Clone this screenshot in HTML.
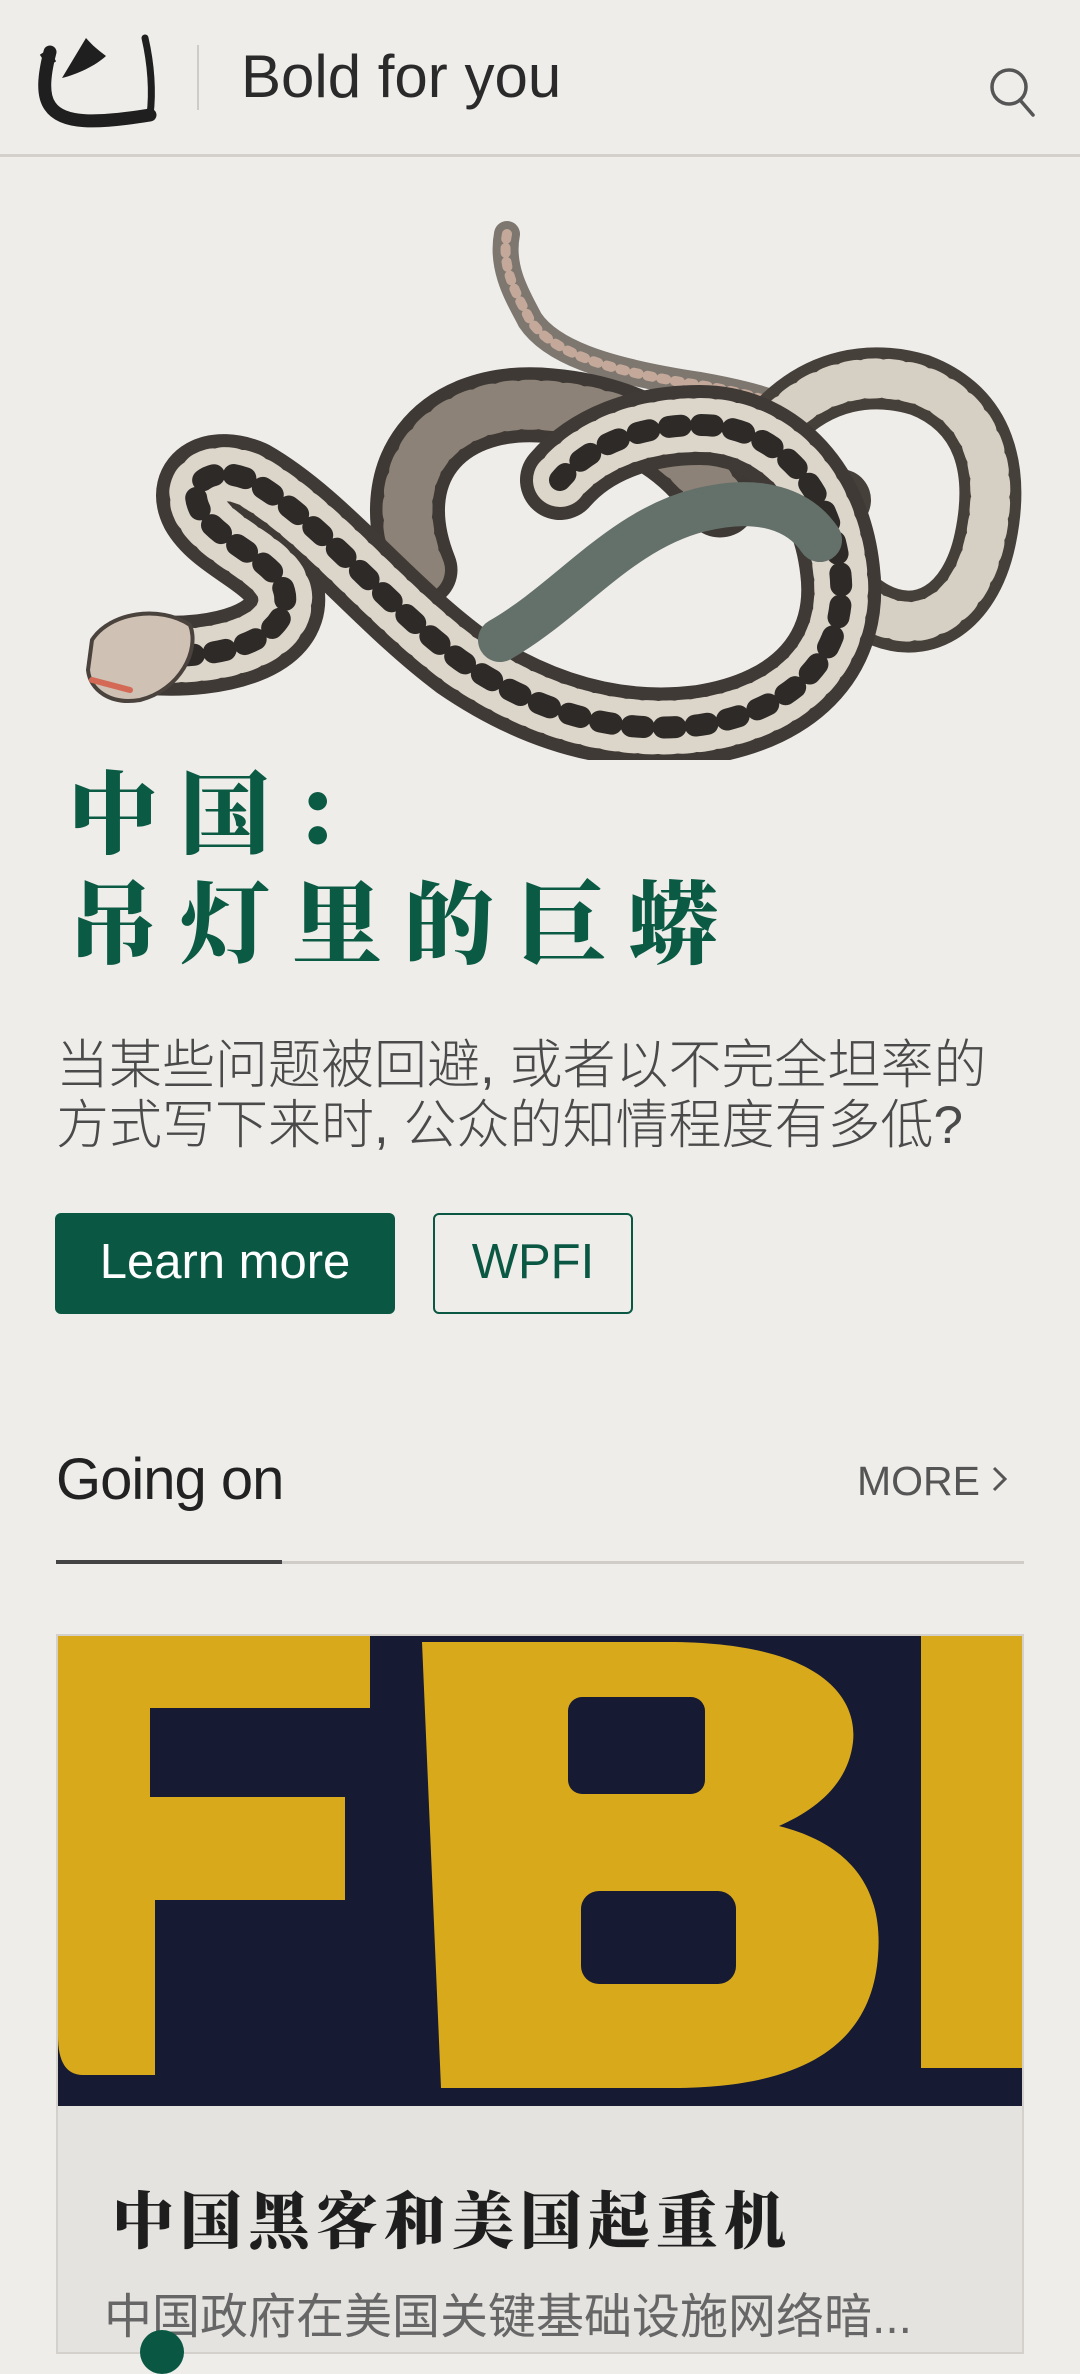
<!DOCTYPE html>
<html><head><meta charset="utf-8"><style>
*{margin:0;padding:0;box-sizing:border-box}
body{width:1080px;height:2337px;background:#efedea;overflow:hidden;position:relative;font-family:"Liberation Sans","Noto Sans CJK SC",sans-serif}
.abs{position:absolute}
.hdr{left:0;top:0;width:1080px;height:157px;border-bottom:3px solid #d3d0cb}
.brand{left:241px;top:42px;font-size:60px;color:#2a2a2a;white-space:nowrap}
.title{left:68px;font-family:"Noto Serif CJK SC","Liberation Serif",serif;font-weight:900;font-size:90px;color:#0b5a44;letter-spacing:22px;white-space:nowrap;line-height:110px}
.sub{left:56px;top:1036px;width:960px;font-size:53px;line-height:60px;color:#4a4a4a;font-family:"Liberation Sans","Noto Sans CJK SC",sans-serif;font-weight:300}
.btn{top:1213px;height:101px;border-radius:6px;font-size:49px;line-height:99px;text-align:center}
</style></head><body>
<div class="abs hdr"></div>
<svg class="abs" style="left:0;top:0" width="200" height="150" viewBox="0 0 200 150">
<path d="M50 52 C44 75 42 95 50 106 C62 124 95 124 150 115" fill="none" stroke="#1f1f1f" stroke-width="13" stroke-linecap="round"/>
<path d="M150 115 C153 92 151 64 145 38" fill="none" stroke="#1f1f1f" stroke-width="7" stroke-linecap="round"/>
<path d="M62 78 L86 38 C92 45 98 50 106 56 C95 66 78 74 62 78 Z" fill="#1f1f1f"/>
<path d="M44 52 L52 64" stroke="#1f1f1f" stroke-width="10"/>
</svg>
<div class="abs" style="left:197px;top:45px;width:2px;height:65px;background:#cfccc7"></div>
<div class="abs brand">Bold for you</div>
<svg class="abs" style="left:985px;top:63px" width="60" height="60" viewBox="0 0 60 60">
<ellipse cx="24" cy="24" rx="17" ry="17" fill="none" stroke="#555" stroke-width="3.5"/>
<path d="M35 37 L48 52" stroke="#555" stroke-width="3.5" stroke-linecap="round"/>
</svg>

<!-- snake (page coords) -->
<svg class="abs" style="left:0;top:0" width="1080" height="760" viewBox="0 0 1080 760">
<g fill="none" stroke-linecap="round" stroke-linejoin="round">
<!-- tail -->
<path d="M507 234 C500 270 520 300 530 320 C550 350 600 370 700 385 C740 392 770 400 790 410" stroke="#7d776f" stroke-width="26"/>
<path d="M507 234 C500 270 520 300 530 320 C550 350 600 370 700 385 C740 392 770 400 790 410" stroke="#c4a99a" stroke-width="10" stroke-dasharray="5 9"/>
<!-- right loop -->
<path d="M780 420 C820 380 870 370 920 385 C985 410 1000 470 985 540 C970 610 920 640 870 610 C830 585 820 540 840 500" stroke="#46403a" stroke-width="62"/>
<path d="M780 420 C820 380 870 370 920 385 C985 410 1000 470 985 540 C970 610 920 640 870 610 C830 585 820 540 840 500" stroke="#d6cfc4" stroke-width="40" stroke-dasharray="8 12"/>
<!-- back coil -->
<path d="M420 570 C380 470 440 400 540 405 C620 410 680 440 720 500" stroke="#3e3935" stroke-width="75"/>
<path d="M420 570 C380 470 440 400 540 405 C620 410 680 440 720 500" stroke="#8d8277" stroke-width="50" stroke-dasharray="6 14"/>
<!-- main body -->
<path d="M150 655 C220 660 290 640 285 595 C280 560 220 545 200 510 C185 480 215 465 250 480 C320 520 380 600 460 660 C540 715 620 735 700 725 C800 710 850 650 840 570 C830 480 770 425 700 425 C640 425 590 445 560 480" stroke="#3f3a36" stroke-width="80"/>
<path d="M150 655 C220 660 290 640 285 595 C280 560 220 545 200 510 C185 480 215 465 250 480 C320 520 380 600 460 660 C540 715 620 735 700 725 C800 710 850 650 840 570 C830 480 770 425 700 425 C640 425 590 445 560 480" stroke="#dcd5ca" stroke-width="54" stroke-dasharray="7 11"/>
<path d="M150 655 C220 660 290 640 285 595 C280 560 220 545 200 510 C185 480 215 465 250 480 C320 520 380 600 460 660 C540 715 620 735 700 725 C800 710 850 650 840 570 C830 480 770 425 700 425 C640 425 590 445 560 480" stroke="#2e2a27" stroke-width="22" stroke-dasharray="12 20"/>
<!-- belly -->
<path d="M500 640 C570 600 620 530 700 510 C760 495 800 510 820 540" stroke="#64716a" stroke-width="44"/>
<!-- head -->
<path d="M92 640 C110 612 160 605 190 625 C200 650 180 690 140 700 C110 705 90 690 88 670 Z" fill="#cfc1b3" stroke="#4a423c" stroke-width="4"/>
<path d="M92 680 L130 690" stroke="#d46a55" stroke-width="6"/>
</g>
</svg>

<div class="abs title" style="top:752px">中国：</div>
<div class="abs title" style="top:862px">吊灯里的巨蟒</div>
<div class="abs sub">当某些问题被回避, 或者以不完全坦率的方式写下来时, 公众的知情程度有多低?</div>
<div class="abs btn" style="left:55px;width:340px;background:#0a5843;color:#fff">Learn more</div>
<div class="abs btn" style="left:433px;width:200px;border:2.5px solid #0a5843;color:#0a5843;line-height:95px">WPFI</div>

<div class="abs" style="left:56px;top:1446px;font-size:58px;color:#222;letter-spacing:-1px">Going on</div>
<div class="abs" style="left:857px;top:1458px;font-size:41px;color:#555">MORE</div>
<svg class="abs" style="left:988px;top:1463px" width="24" height="34" viewBox="0 0 24 34"><path d="M6 5 L17 16 L6 27" fill="none" stroke="#555" stroke-width="3"/></svg>
<div class="abs" style="left:56px;top:1561px;width:968px;height:3px;background:#cfccc7"></div>
<div class="abs" style="left:56px;top:1560px;width:226px;height:4px;background:#444"></div>

<div class="abs" style="left:56px;top:1634px;width:968px;height:720px;background:#e5e3e0;border:2px solid #d4d1cc"></div>
<svg class="abs" style="left:58px;top:1636px" width="964" height="470" viewBox="0 0 964 470">
<rect width="964" height="470" fill="#161a33"/>
<path d="M0 0 H312 V72 H92 V161 H287 V264 H97 V439 H25 Q0 439 0 400 Z" fill="#d9a91c"/>
<path d="M364 6 H610 C760 6 800 60 795 106 C790 150 755 175 721 190 C800 210 825 260 820 320 C815 390 770 452 615 452 H383 Z" fill="#d9a91c"/>
<rect x="510" y="61" width="137" height="97" rx="14" fill="#161a33"/>
<rect x="523" y="255" width="155" height="93" rx="18" fill="#161a33"/>
<rect x="863" y="0" width="101" height="432" fill="#d9a91c"/>
</svg>
<div class="abs" style="left:112px;top:2172px;font-family:'Noto Serif CJK SC','Liberation Serif',serif;font-weight:900;font-size:62px;color:#1e1e1e;letter-spacing:6px;white-space:nowrap">中国黑客和美国起重机</div>
<div class="abs" style="left:104px;top:2277px;font-size:48px;color:#666;white-space:nowrap">中国政府在美国关键基础设施网络暗...</div>
<div class="abs" style="left:140px;top:2330px;width:44px;height:44px;border-radius:50%;background:#0a5843"></div>
</body></html>
